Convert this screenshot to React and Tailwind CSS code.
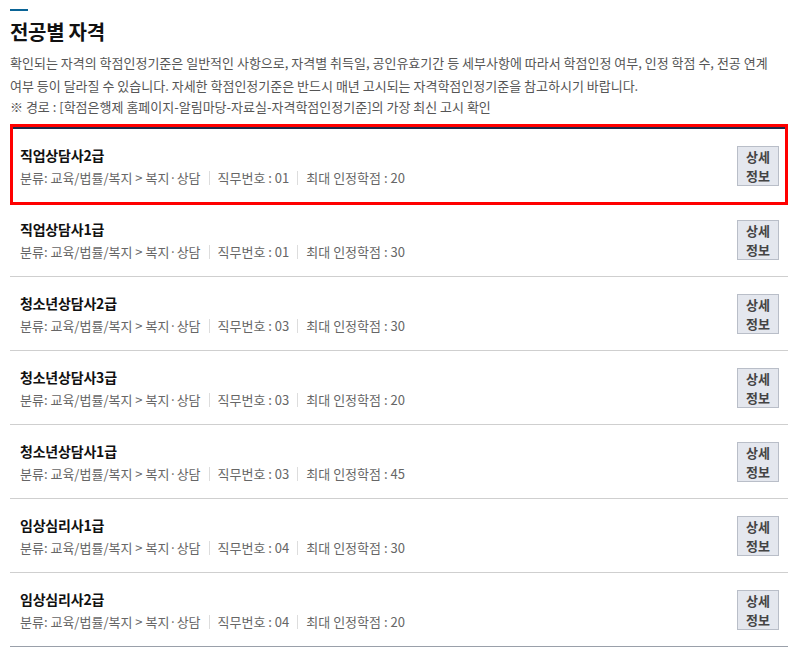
import React from "react";

const items = [
  { name: "직업상담사2급", no: "01", credit: "20" },
  { name: "직업상담사1급", no: "01", credit: "30" },
  { name: "청소년상담사2급", no: "03", credit: "30" },
  { name: "청소년상담사3급", no: "03", credit: "20" },
  { name: "청소년상담사1급", no: "03", credit: "45" },
  { name: "임상심리사1급", no: "04", credit: "30" },
  { name: "임상심리사2급", no: "04", credit: "20" },
];

function Bar() {
  return <span className="inline-block w-px h-[14px] bg-[#dddddd] mx-[8px]" />;
}

function Row({ item, last, highlight }) {
  return (
    <li
      className={
        "relative flex items-center justify-between h-[74px] pl-[10px] pr-[9px] border-b " +
        (last ? "border-[#9aa0aa]" : "border-[#cfcfcf]")
      }
    >
      <div className="pt-[2px]">
        <div className="text-[14px] leading-[20px] font-bold text-[#111] tracking-[-0.2px]">
          {item.name}
        </div>
        <div className="mt-[3px] flex items-center text-[13px] leading-[20px] text-[#666]">
          <span>분류: 교육/법률/복지 &gt; 복지·상담</span>
          <Bar />
          <span>직무번호 : {item.no}</span>
          <Bar />
          <span>최대 인정학점 : {item.credit}</span>
        </div>
      </div>
      <div className="w-[42px] h-[40px] bg-[#e4e7ee] border border-[#b9bec8] text-[13px] leading-[19px] font-bold text-[#444] flex flex-col items-center justify-center">
        <span>상세</span>
        <span>정보</span>
      </div>
      {highlight && (
        <div className="absolute left-0 right-0 top-[-5px] bottom-[-3px] border-[3px] border-[#ff0000] pointer-events-none" />
      )}
    </li>
  );
}

export default function App() {
  return (
    <div
      className="w-[801px] h-[657px] bg-white px-[10px] pt-[9px] overflow-hidden"
      style={{ fontFamily: '"Noto Sans CJK KR", "Noto Sans", sans-serif' }}
    >
      <div className="w-[18px] h-[2px] bg-[#0a6496]" />
      <h2 className="mt-[8px] text-[20px] leading-[26px] font-bold text-[#111] tracking-[-0.3px]">
        전공별 자격
      </h2>
      <p className="mt-[6px] w-[778px] break-keep text-[13px] leading-[23px] text-[#555]">
        확인되는 자격의 학점인정기준은 일반적인 사항으로, 자격별 취득일, 공인유효기간 등 세부사항에 따라서 학점인정 여부, 인정 학점 수, 전공 연계 여부 등이 달라질 수 있습니다. 자세한 학점인정기준은 반드시 매년 고시되는 자격학점인정기준을 참고하시기 바랍니다.
      </p>
      <p className="break-keep text-[13px] leading-[20px] text-[#555]">
        ※ 경로 : [학점은행제 홈페이지-알림마당-자료실-자격학점인정기준]의 가장 최신 고시 확인
      </p>
      <ul className="mt-[10px] w-[778px] border-t-2 border-[#1c2b4a]">
        {items.map((it, i) => (
          <Row key={i} item={it} last={i === items.length - 1} highlight={i === 0} />
        ))}
      </ul>
    </div>
  );
}
